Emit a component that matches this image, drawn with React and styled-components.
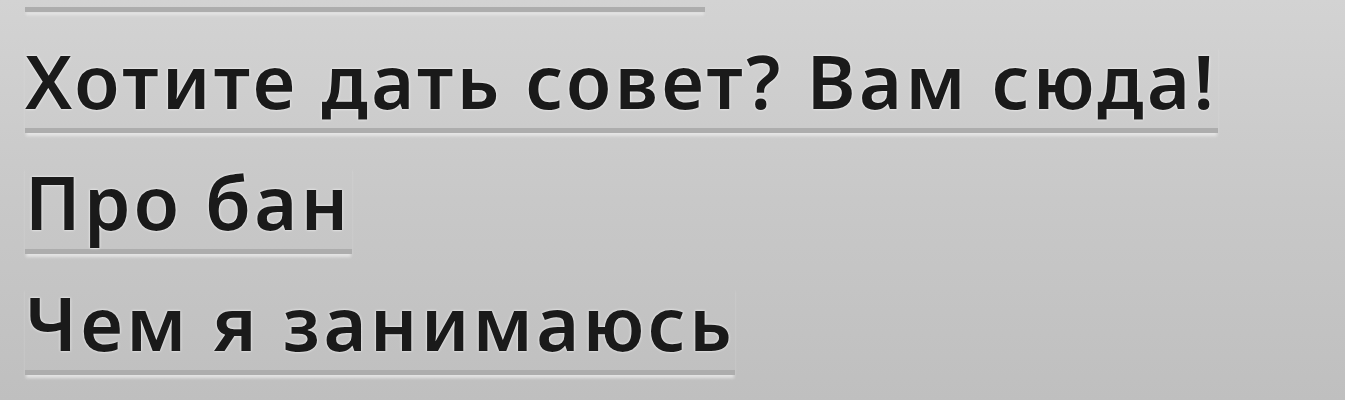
import React from 'react';
import styled, {createGlobalStyle} from 'styled-components';

const GlobalStyle = createGlobalStyle`
	html, body {
		margin: 0;
		padding: 0;
	}
	body {
		background: linear-gradient(180deg, #d3d3d3 0%, #c8c8c8 50%, #bfbfbf 100%);
		min-height: 400px;
		overflow: hidden;
		font-family: 'Noto Sans', 'Open Sans', sans-serif;
	}
`;

const links = [
	'Хотите дать совет? Вам сюда!',
	'Про бан',
	'Чем я занимаюсь',
];

const Menu = () => {
	return (
		<Nav>
			<Tail />
			{links.map((text) => (
				<Item key={text}>
					<MenuLink href="#">{text}</MenuLink>
				</Item>
			))}
		</Nav>
	);
};

const App = () => (
	<>
		<GlobalStyle />
		<Menu />
	</>
);

const Nav = styled.ul`
	list-style: none;
	margin: 0;
	padding: 7px 0 0 25px;
	height: 400px;
	box-sizing: border-box;
	display: flex;
	flex-direction: column;
	align-items: flex-start;
	gap: 32px;
`;

const Tail = styled.li`
	width: 680px;
	height: 0;
	border-bottom: 5px solid #adadad;
	box-shadow: 0 4px 3px -1px rgba(236, 236, 236, 0.8);
`;

const Item = styled.li`
	display: block;
`;

const MenuLink = styled.a`
	display: inline-block;
	font-size: 74px;
	font-weight: 600;
	letter-spacing: 3.5px;
	line-height: 74px;
	color: #1a1a1a;
	text-decoration: none;
	padding-bottom: 10px;
	border-bottom: 5px solid #adadad;
	box-shadow: 0 4px 3px -1px rgba(236, 236, 236, 0.8);
	text-shadow: 0 0 3px rgba(255, 255, 255, 0.9), 0 0 1px rgba(255, 255, 255, 0.7);
	white-space: nowrap;
`;

export default App;
